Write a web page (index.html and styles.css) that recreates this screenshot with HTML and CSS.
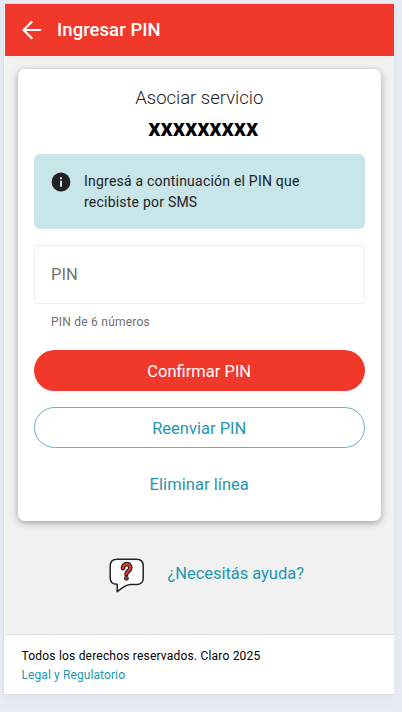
FILE: index.html
```html
<!DOCTYPE html>
<html lang="es">
<head>
<meta charset="utf-8">
<meta name="viewport" content="width=device-width, initial-scale=1">
<title>Ingresar PIN</title>
<link rel="stylesheet" href="styles.css">
</head>
<body>
<div class="app">
  <header class="topbar">
    <svg class="back" width="20" height="20" viewBox="0 0 20 20" fill="none" stroke="#fff" stroke-width="2.100"><path d="M19.200 10H2M10.300 1.200L1.500 10l8.800 8.800"/></svg>
    <h1 class="title">Ingresar PIN</h1>
  </header>
  <main class="content">
    <section class="card">
      <h2 class="heading">Asociar servicio</h2>
      <p class="number">xxxxxxxxx</p>
      <div class="notice">
        <svg class="info" width="20" height="20" viewBox="0 0 20 20"><circle cx="10" cy="10" r="9.400" fill="#222"/><path d="M9 5.200h2v2H9zM9 8.800h2v6H9z" fill="#c8e5ea"/></svg>
        <p class="notice-text">Ingresá a continuación el PIN que recibiste por SMS</p>
      </div>
      <div class="field"><span class="label">PIN</span></div>
      <p class="hint">PIN de 6 números</p>
      <button class="btn primary">Confirmar PIN</button>
      <button class="btn outline">Reenviar PIN</button>
      <button class="btn link">Eliminar línea</button>
    </section>
    <a class="help">
      <svg class="bubble" width="36" height="36" viewBox="0 0 36 36" fill="none" stroke-linejoin="round" stroke-linecap="round"><path d="M8.500 1.200h19c4.500 0 6.700 2.200 6.700 6.700v12c0 4.600-2.200 6.500-6.700 6.500h-6c-5 0-8.500 3.400-13.300 7.300v-7.500c-4.800 0-7-1.900-7-6.300v-12c0-4.500 2.300-6.700 7.300-6.700z" fill="#fff" stroke="#222" stroke-width="1.500"/><path d="M14 10.300c0-5.600 7.400-5.400 7.400-.6 0 3.500-4 3.300-4 6.300" stroke="#222" stroke-width="4.500"/><circle cx="17.400" cy="20.300" r="2.400" fill="#222"/><path d="M14 10.300c0-5.600 7.400-5.400 7.400-.6 0 3.500-4 3.300-4 6.300" stroke="#ef382a" stroke-width="2.200"/><circle cx="17.400" cy="20.300" r="1.200" fill="#ef382a"/></svg>
      <span>¿Necesitás ayuda?</span>
    </a>
  </main>
  <footer class="footer">
    <p class="rights">Todos los derechos reservados. Claro 2025</p>
    <a class="legal">Legal y Regulatorio</a>
  </footer>
</div>
</body>
</html>
```
FILE: styles.css
```css
* { box-sizing: border-box; }
body {
  margin: 0;
  height: 712px;
  padding: 3px 8px 0 3px;
  background: #e8edf5;
  font-family: Roboto, sans-serif;
  overflow: hidden;
}
h1, h2, p { margin: 0; }
.app {
  height: 692px;
  display: flex;
  flex-direction: column;
  border: 1px solid #d9dce1;
  border-right: 0;
  padding-left: 1px;
  background: #fff;
  box-shadow: 0 4px 16px rgba(80, 90, 110, .06);
}
.topbar {
  height: 52px;
  flex: none;
  display: flex;
  align-items: center;
  gap: 15px;
  padding-left: 17px;
  background: #f0382b;
}
.title { color: #fff; font-size: 18.500px; font-weight: 500; line-height: 24px; letter-spacing: .05px; }
.content {
  flex: 1;
  display: flex;
  flex-direction: column;
  padding: 13px 13px 0 12.500px;
  background: #f1f1f1;
}
.card {
  height: 452px;
  display: flex;
  flex-direction: column;
  padding: 17px 16.500px 0;
  border-radius: 7px;
  background: #fff;
  box-shadow: 0 2px 7px rgba(0, 0, 0, .34);
}
.heading { height: 25px; color: #222; font-size: 18.500px; font-weight: 300; line-height: 25px; text-align: center; }
.number { height: 27px; margin-top: 4px; padding-left: 8px; color: #000; font-size: 24px; font-weight: 700; line-height: 27px; text-align: center; }
.notice {
  height: 75px;
  margin-top: 12px;
  display: flex;
  gap: 13px;
  padding: 17px 16px 0 17px;
  border-radius: 6px;
  background: #c8e5ea;
}
.info { flex: none; margin-top: 1px; }
.notice-text { width: 230px; color: #222; font-size: 14px; line-height: 21px; letter-spacing: .22px; }
.field {
  height: 59px;
  margin-top: 16px;
  display: flex;
  align-items: center;
  padding-left: 16px;
  border: 1px solid #ededed;
  border-radius: 4px;
}
.label { color: #737373; font-size: 16.500px; }
.hint { height: 16px; margin: 10px 0 20px 17px; color: #707070; font-size: 12px; line-height: 16px; letter-spacing: .23px; }
.btn {
  height: 41px;
  flex: none;
  padding: 2px 0 0;
  border: 0;
  border-radius: 21px;
  background: none;
  font: 400 16.500px/24px Roboto, sans-serif;
  color: #2398ae;
}
.primary { background: #f0382b; color: #fff; }
.outline { margin-top: 16px; border: 1px solid #5cb5c5; }
.link { margin-top: 16px; padding-top: 0; letter-spacing: .05px; }
.help {
  display: flex;
  align-items: center;
  gap: 23px;
  margin: 35px 0 0 91px;
  color: #2398ae;
  font-size: 16.500px;
  line-height: 24px;
}
.bubble { margin-top: 2px; }
.help span { margin-bottom: 2px; letter-spacing: -.04px; }
.footer {
  height: 60px;
  flex: none;
  padding: 12px 0 0 16.500px;
  border-top: 1px solid #dedede;
  background: #fff;
  font-size: 12px;
  line-height: 19px;
  letter-spacing: .2px;
}
.rights { color: #000; }
.legal { color: #2398ae; letter-spacing: .1px; }
```
